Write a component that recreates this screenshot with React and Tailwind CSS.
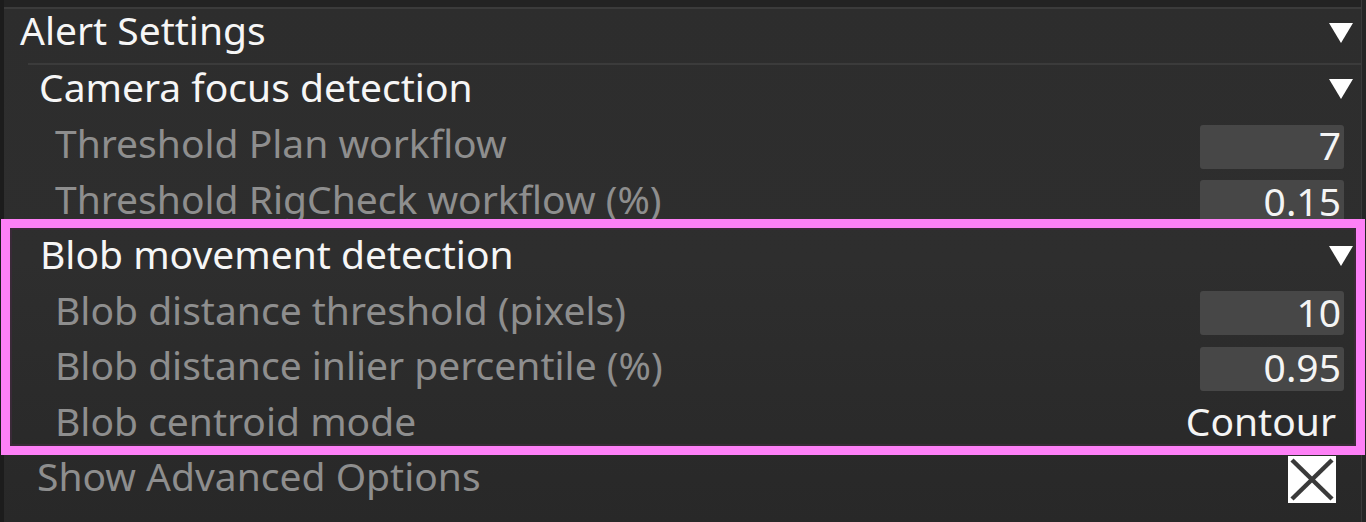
import React from 'react'

const font = { fontFamily: '"Noto Sans", "Open Sans", sans-serif' }

const Arrow = () => (
  <svg width="24" height="20" viewBox="0 0 24 20" className="shrink-0">
    <polygon points="0,0 24,0 12,20" fill="#ffffff" />
  </svg>
)

const ValueBox = ({ value }) => (
  <div className="w-[144px] h-[44px] bg-[#474747] rounded-[3px] flex items-center justify-end pr-[3px] pb-[4px] text-[39px] leading-none text-[#f4f4f4]">
    {value}
  </div>
)

const Header = ({ label, row, text }) => (
  <div className={`flex items-center justify-between pr-[8px] ${row}`}>
    <span className={`text-[39px] leading-none text-[#f6f6f6] ${text}`}>{label}</span>
    <Arrow />
  </div>
)

const Field = ({ label, children }) => (
  <div className="h-[55.5px] flex items-center justify-between pl-[51px] pr-[17px]">
    <span className="text-[39px] leading-none text-[#8e8e8e] pb-[8px]">{label}</span>
    {children}
  </div>
)

export default function App() {
  return (
    <div className="w-[1366px] h-[522px] overflow-hidden flex bg-[#1e1e1e] relative" style={font}>
      <div className="w-[4px] bg-[#1c1c1c]" />
      <div className="flex-1 flex flex-col bg-gradient-to-b from-[#2d2d2d] via-[#2e2e2e] to-[#282828]">
        <div className="h-[7px] bg-[#232323]" />
        <div className="h-[2px] bg-[#3b3b3b]" />
        <Header label="Alert Settings" row="h-[54px] pl-[16px] pb-[6px]" text="pb-[8px]" />
        <div className="h-[2px] ml-[24px] bg-[#3b3b3b]" />
        <Header label="Camera focus detection" row="h-[54px] pl-[35px] pb-[6px]" text="pb-[6px]" />
        <Field label="Threshold Plan workflow">
          <ValueBox value="7" />
        </Field>
        <Field label="Threshold RigCheck workflow (%)">
          <ValueBox value="0.15" />
        </Field>
        <Header label="Blob movement detection" row="h-[55.5px] pl-[36px] pb-[4px]" text="pb-[5px]" />
        <Field label="Blob distance threshold (pixels)">
          <ValueBox value="10" />
        </Field>
        <Field label="Blob distance inlier percentile (%)">
          <ValueBox value="0.95" />
        </Field>
        <div className="h-[55.5px] flex items-center justify-between pl-[51px] pr-[25px] pb-[8px]">
          <span className="text-[39px] leading-none text-[#8e8e8e]">Blob centroid mode</span>
          <span className="text-[39px] leading-none text-[#f4f4f4]">Contour</span>
        </div>
        <div className="h-[55.5px] flex items-center justify-between pl-[33px] pr-[25px]">
          <span className="text-[39px] leading-none text-[#8e8e8e] pb-[9px]">Show Advanced Options</span>
          <svg width="48" height="47" viewBox="0 0 48 47">
            <rect width="48" height="47" fill="#ffffff" />
            <line x1="4" y1="4" x2="44" y2="43" stroke="#3a3a3a" strokeWidth="4.5" />
            <line x1="44" y1="4" x2="4" y2="43" stroke="#3a3a3a" strokeWidth="4.5" />
          </svg>
        </div>
      </div>
      <div className="w-[5px] bg-[#252525] border-l border-[#3a3a3a]" />

      {/* highlight frame drawn over the blob section */}
      <div className="absolute left-[1px] top-[219px] w-[1364px] h-[236px] border-[9px] border-[#fd80f6] shadow-[inset_0_0_0_2px_#3a2a38] pointer-events-none" />
    </div>
  )
}
